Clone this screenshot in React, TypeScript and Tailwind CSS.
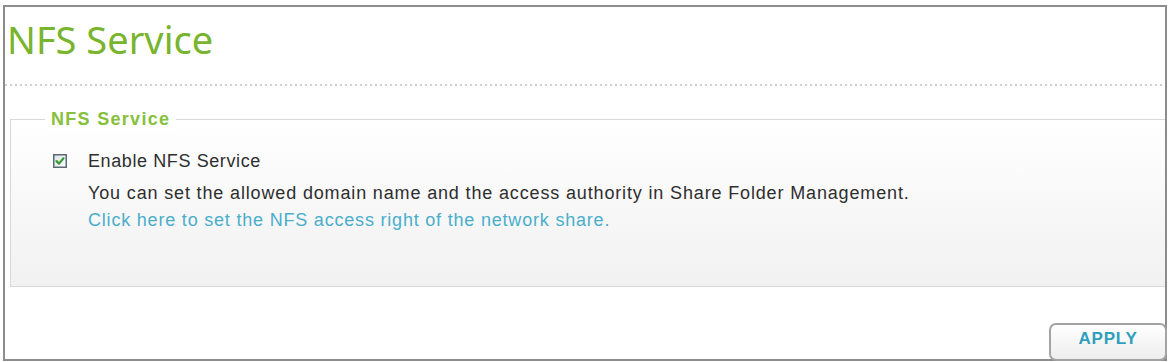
import React from "react";

function CheckBox() {
  return (
    <svg width="14" height="14" viewBox="0 0 14 14" className="shrink-0">
      <defs>
        <linearGradient id="cbg" x1="0" y1="0" x2="1" y2="1">
          <stop offset="0" stopColor="#d9e1e6" />
          <stop offset="1" stopColor="#ffffff" />
        </linearGradient>
      </defs>
      <rect x="0.75" y="0.75" width="12.5" height="12.5" fill="url(#cbg)" stroke="#5a6a75" strokeWidth="1.5" />
      <path d="M3.5 7.1 L6 9.6 L10.5 4.3" fill="none" stroke="#3c9a36" strokeWidth="2.2" strokeLinecap="round" strokeLinejoin="round" />
    </svg>
  );
}

export default function App() {
  return (
    <div className="w-[1171px] h-[362px] overflow-hidden bg-white">
      <div className="ml-[3px] mt-[5px] w-[1164px] h-[356px] border-2 border-[#8c8c8c] flex flex-col">
        <div
          className="pl-[2px] pt-[13px] text-[38px] leading-[38px] text-[#78b42d]"
          style={{ fontFamily: '"Noto Sans", sans-serif' }}
        >
          NFS Service
        </div>
        <div className="mt-[26px] h-[2px] bg-[repeating-linear-gradient(90deg,#cfcfcf_0_2px,transparent_2px_5px)]" />
        <div
          className="relative mt-[33px] ml-[5px] h-[168px] border-t border-l border-b border-[#d9d9d9] bg-gradient-to-b from-white to-[#f1f1f1]"
          style={{ fontFamily: '"Liberation Sans", Arial, sans-serif' }}
        >
          <div className="absolute -top-[11px] left-[34px] bg-white px-[6px] text-[18px] leading-[20px] font-bold tracking-[1.3px] text-[#86c03c]">
            NFS Service
          </div>
          <div className="pl-[42px] pt-[31px] flex items-center gap-[21px]">
            <CheckBox />
            <span className="text-[18px] leading-[20px] tracking-[0.6px] text-[#2e2e2e]">Enable NFS Service</span>
          </div>
          <div className="pl-[77px] pt-[9px] text-[18px] leading-[26px] tracking-[0.85px] text-[#2e2e2e]">
            You can set the allowed domain name and the access authority in Share Folder Management.
          </div>
          <div className="pl-[77px] pt-[1px] text-[18px] leading-[26px] tracking-[0.8px] text-[#4aaecb]">
            Click here to set the NFS access right of the network share.
          </div>
        </div>
        <div className="flex-1 flex justify-end items-end">
          <button
            className="w-[118px] h-[38px] -mb-[2px] -mr-[2px] rounded-[7px] border-2 border-[#a3a3a3] bg-gradient-to-b from-white to-[#ededed] text-[17px] leading-[18px] font-bold tracking-[0.8px] text-[#2f9fbd] flex items-start justify-center pt-[5px]"
            style={{ fontFamily: '"Liberation Sans", Arial, sans-serif' }}
          >
            APPLY
          </button>
        </div>
      </div>
    </div>
  );
}
